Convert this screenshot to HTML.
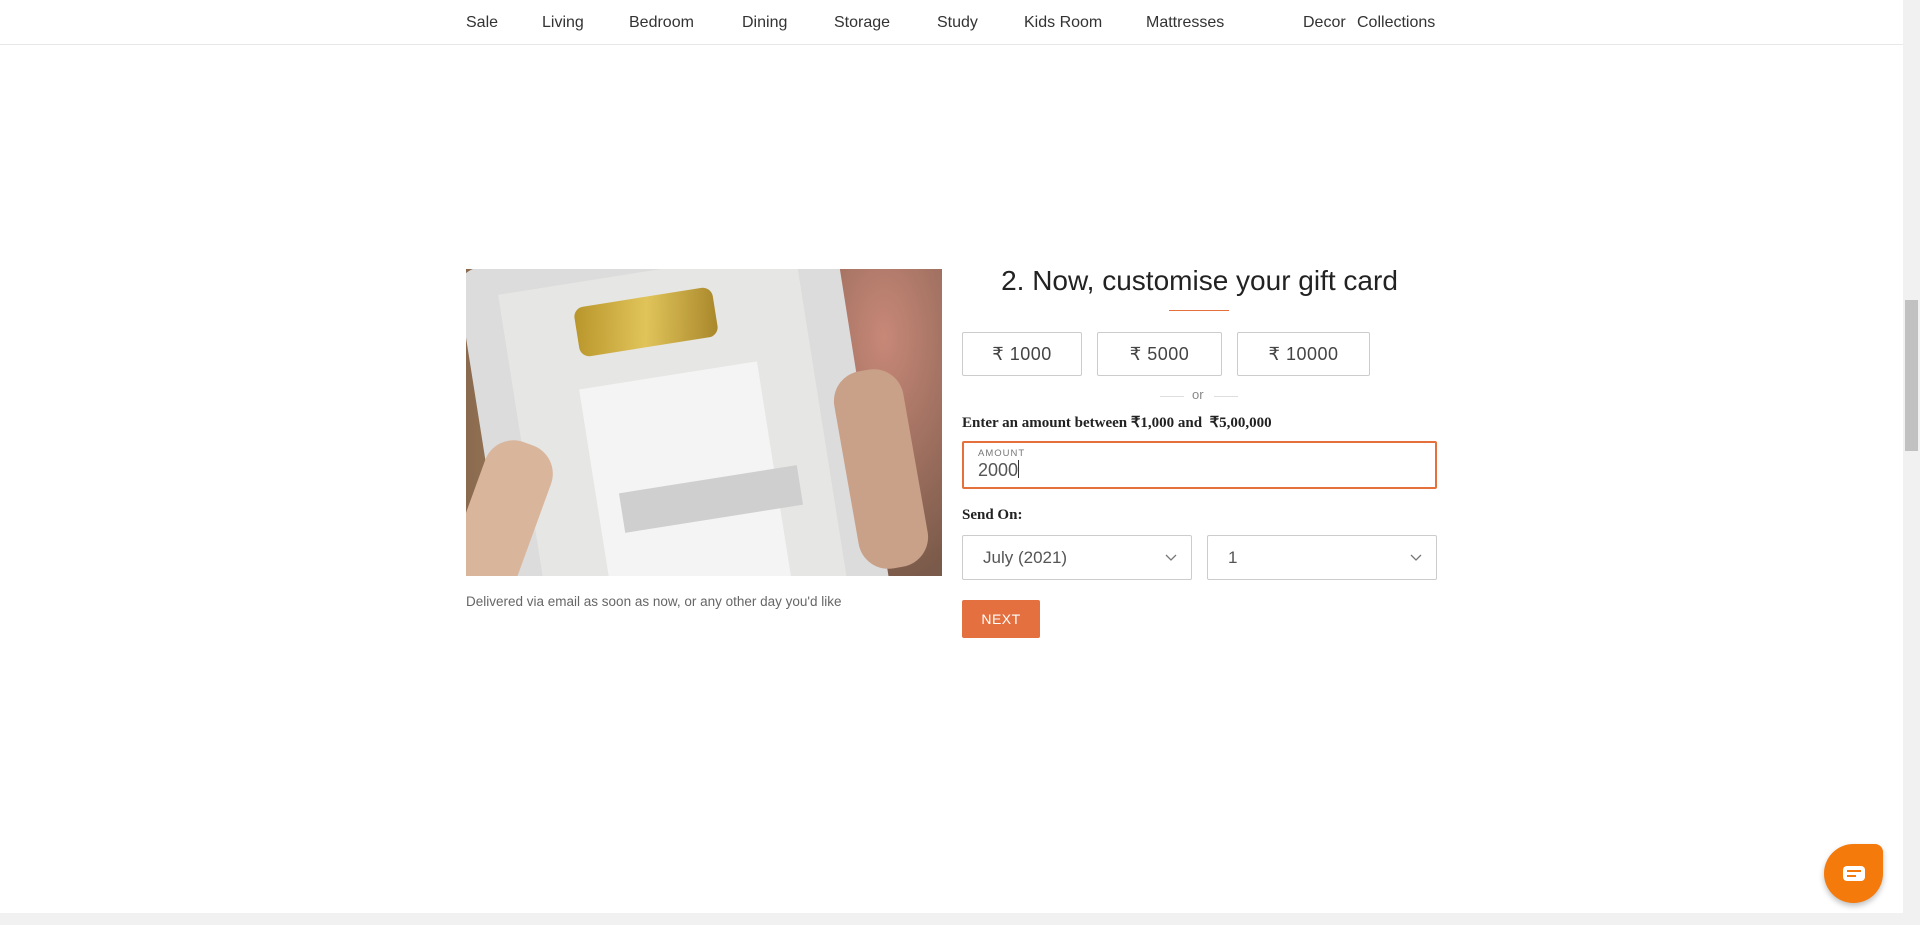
<!DOCTYPE html>
<html><head><meta charset="utf-8"><style>
*{margin:0;padding:0;box-sizing:border-box}
body{width:1920px;height:925px;background:#fff;font-family:"Liberation Sans",sans-serif;position:relative;overflow:hidden;color:#333}
.a{position:absolute}
.nav span{position:absolute;top:14px;font-size:16px;color:#333;white-space:nowrap}
.btn{position:absolute;top:332px;height:44px;border:1px solid #ccc;border-radius:2px;font-size:18px;color:#444;display:flex;align-items:center;justify-content:center;letter-spacing:.5px}
.sel{position:absolute;top:535px;height:45px;border:1px solid #ccc;border-radius:2px;font-size:17px;color:#555}
.sel span{position:absolute;left:20px;top:12px}
.sel svg{position:absolute;right:14px;top:18px}
</style></head><body>
<div class="nav">
<span style="left:466px">Sale</span><span style="left:542px">Living</span><span style="left:629px">Bedroom</span><span style="left:742px">Dining</span><span style="left:834px">Storage</span><span style="left:937px">Study</span><span style="left:1024px">Kids Room</span><span style="left:1146px">Mattresses</span><span style="left:1303px">Decor</span><span style="left:1357px">Collections</span>
</div>
<div class="a" style="left:0;top:44px;width:1903px;height:1px;background:#e8e8e8"></div>

<div class="a" style="left:466px;top:269px;width:476px;height:307px;overflow:hidden;background:linear-gradient(90deg,#8a6a4e 0%,#b89474 30%,#a88064 70%,#6e5444 100%)">
 <div class="a" style="left:330px;top:-40px;width:220px;height:360px;border-radius:50%;background:radial-gradient(ellipse at 40% 30%,#c88878,#7a5a4a 70%)"></div>
 <div class="a" style="left:20px;top:-30px;width:380px;height:420px;background:#dcdcdc;border-radius:22px;transform:rotate(-9deg)"></div>
 <div class="a" style="left:60px;top:0px;width:300px;height:380px;background:#e6e6e4;transform:rotate(-9deg)"></div>
 <div class="a" style="left:110px;top:28px;width:140px;height:50px;background:linear-gradient(100deg,#b8952a,#e0c45a,#a8862a);border-radius:10px;transform:rotate(-9deg)"></div>
 <div class="a" style="left:130px;top:105px;width:180px;height:230px;background:#f4f4f4;transform:rotate(-9deg)"></div>
 <div class="a" style="left:155px;top:210px;width:180px;height:40px;background:#cfcfcf;transform:rotate(-9deg)"></div>
 <div class="a" style="left:0;top:170px;width:70px;height:160px;background:#d9b59c;border-radius:30px;transform:rotate(20deg)"></div>
 <div class="a" style="left:380px;top:100px;width:70px;height:200px;background:#c9a088;border-radius:30px;transform:rotate(-10deg)"></div>
</div>
<div class="a" style="left:466px;top:594px;font-size:13.5px;color:#666">Delivered via email as soon as now, or any other day you'd like</div>

<div class="a" style="left:942px;width:515px;top:265px;text-align:center;font-size:28px;color:#222">2. Now, customise your gift card</div>
<div class="a" style="left:1169px;top:310px;width:60px;height:1px;background:#e5703c"></div>
<div class="btn" style="left:962px;width:120px">₹ 1000</div>
<div class="btn" style="left:1097px;width:125px">₹ 5000</div>
<div class="btn" style="left:1237px;width:133px">₹ 10000</div>
<div class="a" style="left:1160px;top:396px;width:24px;height:1px;background:#ddd"></div>
<div class="a" style="left:1214px;top:396px;width:24px;height:1px;background:#ddd"></div>
<div class="a" style="left:1192px;top:387px;font-size:13px;color:#888">or</div>
<div class="a" style="left:962px;top:413px;font-family:'Liberation Serif',serif;font-weight:bold;font-size:15px;color:#222">Enter an amount between ₹1,000 and&nbsp; ₹5,00,000</div>
<div class="a" style="left:962px;top:441px;width:475px;height:48px;border:2px solid #e5703c;border-radius:2px">
 <div class="a" style="left:14px;top:5px;font-size:9.5px;letter-spacing:1px;color:#777">AMOUNT</div>
 <div class="a" style="left:14px;top:17px;font-size:18px;color:#555">2000<span style="display:inline-block;width:1px;height:18px;background:#333;vertical-align:-2px"></span></div>
</div>
<div class="a" style="left:962px;top:507px;font-family:'Liberation Serif',serif;font-weight:bold;font-size:15px;color:#222">Send On:</div>
<div class="sel" style="left:962px;width:230px"><span>July (2021)</span><svg width="12" height="8" viewBox="0 0 12 8"><path d="M1 1l5 5 5-5" fill="none" stroke="#777" stroke-width="1.3"/></svg></div>
<div class="sel" style="left:1207px;width:230px"><span>1</span><svg width="12" height="8" viewBox="0 0 12 8"><path d="M1 1l5 5 5-5" fill="none" stroke="#777" stroke-width="1.3"/></svg></div>
<div class="a" style="left:962px;top:600px;width:78px;height:38px;background:#e5703f;border-radius:2px;color:#fff;font-size:14px;display:flex;align-items:center;justify-content:center;letter-spacing:.5px">NEXT</div>

<div class="a" style="left:1824px;top:844px;width:59px;height:59px;background:#f47a0c;border-radius:50% 8px 50% 50%;box-shadow:0 3px 6px rgba(0,0,0,.25)">
 <div class="a" style="left:19px;top:22px;width:22px;height:15px;background:#fff;border-radius:4px"></div>
 <div class="a" style="left:23px;top:26px;width:14px;height:2px;background:#f47a0c"></div>
 <div class="a" style="left:23px;top:31px;width:9px;height:2px;background:#f47a0c"></div>
</div>

<div class="a" style="left:1903px;top:0;width:17px;height:925px;background:#f1f1f1"></div>
<div class="a" style="left:1905px;top:300px;width:13px;height:151px;background:#c1c1c1"></div>
<div class="a" style="left:0;top:913px;width:1903px;height:12px;background:#f1f1f1"></div>
</body></html>
